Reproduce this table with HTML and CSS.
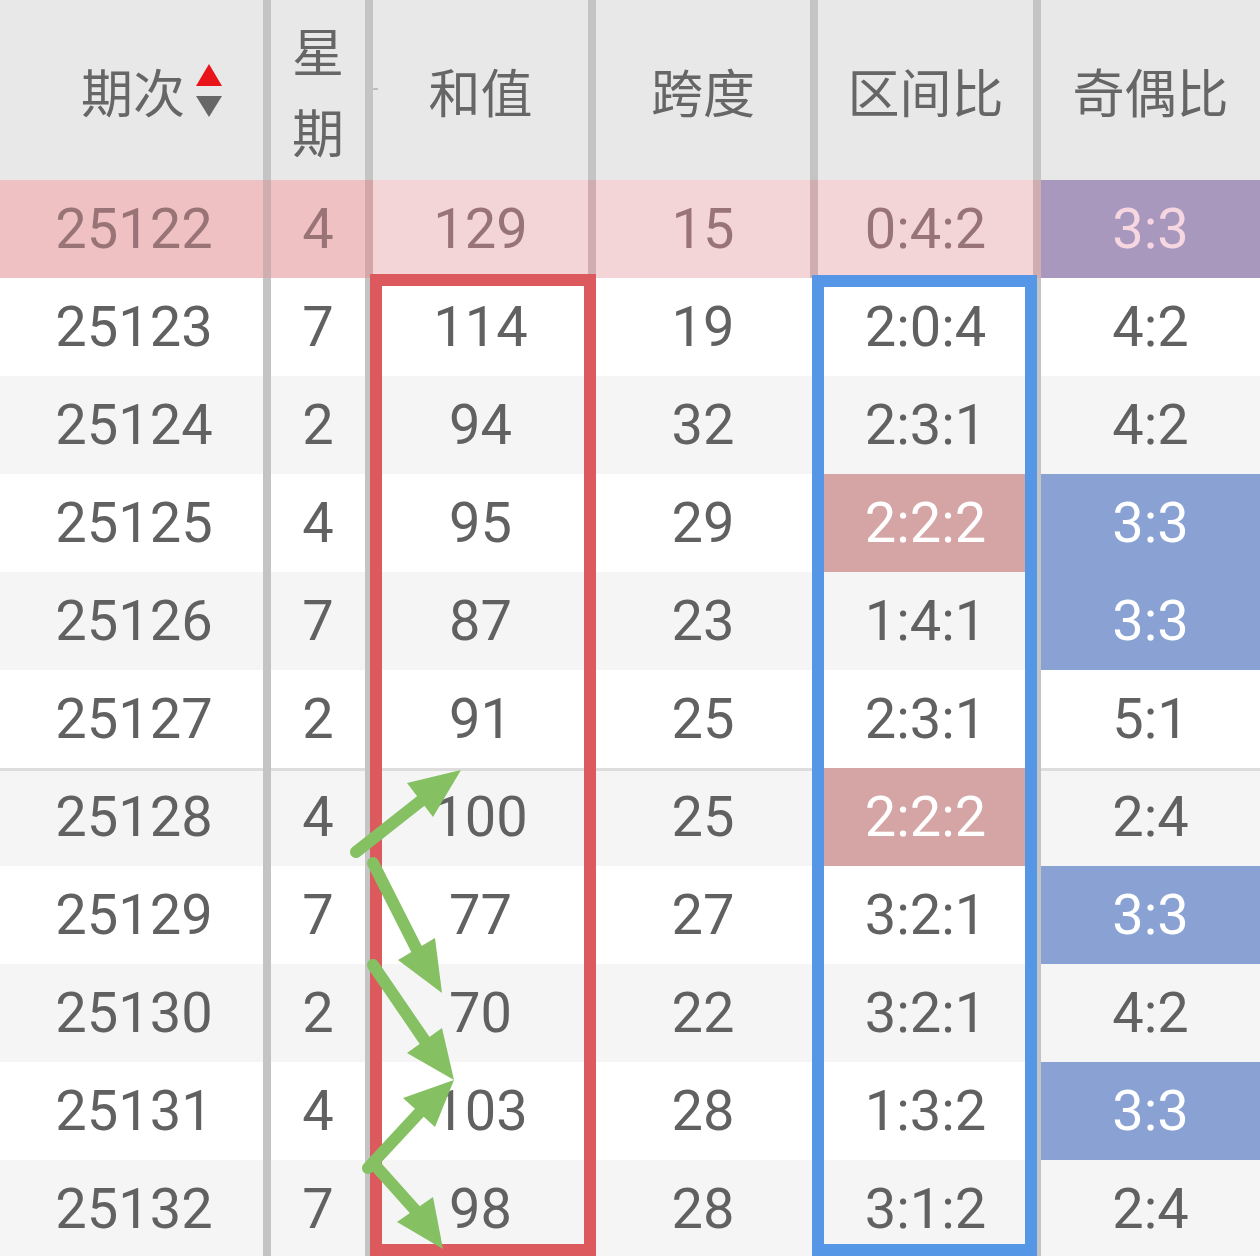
FILE: index.html
```html
<!DOCTYPE html>
<html lang="zh-CN">
<head>
<meta charset="utf-8">
<title>走势表</title>
<link rel="stylesheet" href="styles.css">
</head>
<body>
<div class="sheet">
  <div class="row head">
    <div class="cell th c1"><span>期次</span><svg class="sort" width="26" height="53" viewBox="0 0 26 53"><polygon points="0,22 26,22 13,0" fill="#e8141a"/><polygon points="0,32 26,32 13,53" fill="#676767"/></svg></div>
    <div class="cell th c2"><span class="stack">星<br>期</span></div>
    <div class="cell th">和值</div>
    <div class="cell th">跨度</div>
    <div class="cell th">区间比</div>
    <div class="cell th last">奇偶比</div>
  </div>

  <div class="row current">
    <div class="cell left first">25122</div>
    <div class="cell left">4</div>
    <div class="cell">129</div>
    <div class="cell">15</div>
    <div class="cell">0:4:2</div>
    <div class="cell last purple">3:3</div>
  </div>

  <div class="row w">
    <div class="cell first">25123</div><div class="cell">7</div><div class="cell">114</div><div class="cell c4">19</div><div class="cell">2:0:4</div><div class="cell last">4:2</div>
  </div>
  <div class="row g">
    <div class="cell first">25124</div><div class="cell">2</div><div class="cell">94</div><div class="cell c4">32</div><div class="cell">2:3:1</div><div class="cell last">4:2</div>
  </div>
  <div class="row w">
    <div class="cell first">25125</div><div class="cell">4</div><div class="cell">95</div><div class="cell c4">29</div><div class="cell pink">2:2:2</div><div class="cell last blue">3:3</div>
  </div>
  <div class="row g">
    <div class="cell first">25126</div><div class="cell">7</div><div class="cell">87</div><div class="cell c4">23</div><div class="cell">1:4:1</div><div class="cell last blue">3:3</div>
  </div>
  <div class="row w">
    <div class="cell first">25127</div><div class="cell">2</div><div class="cell">91</div><div class="cell c4">25</div><div class="cell">2:3:1</div><div class="cell last">5:1</div>
  </div>
  <div class="row g sep">
    <div class="cell first">25128</div><div class="cell">4</div><div class="cell">100</div><div class="cell c4">25</div><div class="cell pink">2:2:2</div><div class="cell last">2:4</div>
  </div>
  <div class="row w">
    <div class="cell first">25129</div><div class="cell">7</div><div class="cell">77</div><div class="cell c4">27</div><div class="cell">3:2:1</div><div class="cell last blue">3:3</div>
  </div>
  <div class="row g">
    <div class="cell first">25130</div><div class="cell">2</div><div class="cell">70</div><div class="cell c4">22</div><div class="cell">3:2:1</div><div class="cell last">4:2</div>
  </div>
  <div class="row w">
    <div class="cell first">25131</div><div class="cell">4</div><div class="cell">103</div><div class="cell c4">28</div><div class="cell">1:3:2</div><div class="cell last blue">3:3</div>
  </div>
  <div class="row g">
    <div class="cell first">25132</div><div class="cell">7</div><div class="cell">98</div><div class="cell c4">28</div><div class="cell">3:1:2</div><div class="cell last">2:4</div>
  </div>

  <div class="box box-red"></div>
  <div class="box box-blue"></div>

  <svg class="arrows" width="1260" height="1256" viewBox="0 0 1260 1256">
    <g stroke="#85c062" stroke-width="12" stroke-linecap="round" fill="none">
      <line x1="356" y1="852" x2="422" y2="800"/>
      <line x1="373" y1="863" x2="417" y2="950"/>
      <line x1="373" y1="965" x2="425" y2="1041"/>
      <line x1="368" y1="1168" x2="420" y2="1112"/>
      <line x1="374" y1="1164" x2="416" y2="1211"/>
    </g>
    <g fill="#85c062">
      <polygon points="461,770 407,783 433,817"/>
      <polygon points="442,993 398,960 435,938"/>
      <polygon points="454,1080 407,1053 442,1028"/>
      <polygon points="454,1080 403,1098 435,1127"/>
      <polygon points="443,1249 397,1222 433,1197"/>
    </g>
  </svg>
</div>
</body>
</html>
```

FILE: styles.css
```css
html, body {
  margin: 0;
  padding: 0;
  background: #ffffff;
}

body {
  width: 1260px;
  height: 1256px;
  overflow: hidden;
}

.sheet {
  position: relative;
  width: 1260px;
  height: 1256px;
  overflow: hidden;
  font-family: Roboto, "Noto Sans CJK SC", sans-serif;
  color: #616161;
}

.row {
  display: grid;
  grid-template-columns: 271px 102px 223px 222px 223px 219px;
  height: 98px;
}

.row.w { background: #ffffff; }
.row.g { background: #f5f5f5; }
.row.sep { box-shadow: inset 0 3px 0 #dddddd; }

.cell {
  display: flex;
  align-items: center;
  justify-content: center;
  border-right: 8px solid #c4c4c4;
  font-size: 56px;
  line-height: 98px;
  white-space: nowrap;
}

.cell.first { padding-left: 5px; }
.cell.last { border-right: 0; }
.cell.c4 { border-right-color: transparent; }

/* header */
.row.head {
  height: 180px;
  background: #e8e8e8;
}

.th {
  font-family: "Noto Sans CJK SC", sans-serif;
  font-size: 52px;
  line-height: 81px;
  color: #666666;
  border-right-color: #c4c4c4;
}

.th.c1 {
  justify-content: flex-end;
  padding-right: 41px;
  gap: 11px;
}

.th.c2 { position: relative; }
.th.c2::after {
  content: "";
  position: absolute;
  left: 102px;
  top: 88px;
  width: 5px;
  height: 2px;
  background: #bdbdbd;
}

.stack {
  display: block;
  text-align: center;
}

.sort {
  display: block;
  flex: none;
}

/* current (highlighted) row */
.row.current {
  background: #f3d5d7;
  color: #987477;
}
.row.current .cell { border-right-color: #d0adaf; }
.row.current .cell.left { background: #f0c1c2; }
.row.current .cell.left + .cell.left { border-right-color: #d4a6a8; }

.purple {
  background: #a898bd;
  color: #f6d6e0;
}

.pink {
  background: #d5a5a6;
  color: #ffffff;
}

.blue {
  background: #8aa1d3;
  color: #ffffff;
}

/* overlays */
.box {
  position: absolute;
  box-sizing: border-box;
  border: 12px solid;
}

.box-red {
  left: 370px;
  top: 274px;
  width: 226px;
  height: 982px;
  border-color: #dc595e;
}

.box-blue {
  left: 812px;
  top: 275px;
  width: 225px;
  height: 981px;
  border-color: #5596e6;
}

.arrows {
  position: absolute;
  left: 0;
  top: 0;
}
```
